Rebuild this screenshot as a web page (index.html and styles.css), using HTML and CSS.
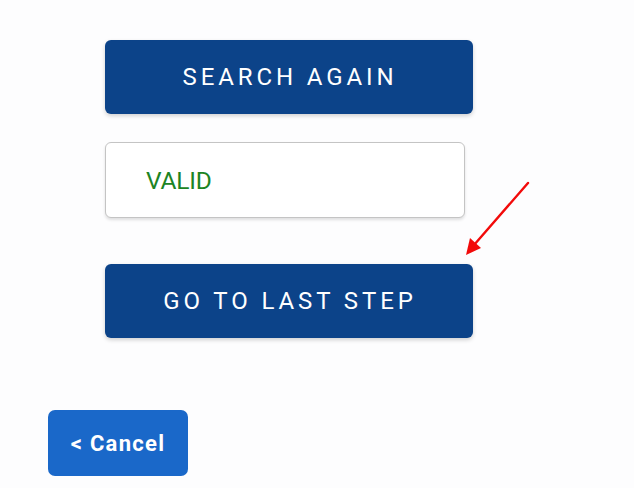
FILE: index.html
```html
<!DOCTYPE html>
<html>
<head>
<meta charset="utf-8">
<link rel="stylesheet" href="styles.css">
</head>
<body>
<div class="page">
  <div class="column">
    <button class="btn primary">SEARCH AGAIN</button>
    <div class="status"><span class="valid">VALID</span></div>
    <button class="btn primary last">GO TO LAST STEP</button>
  </div>
  <button class="cancel">&lt; Cancel</button>
  <svg class="arrow" width="80" height="90" viewBox="0 0 80 90">
    <line x1="70" y1="10" x2="16" y2="72" stroke="#f20a0a" stroke-width="2.4" stroke-linecap="round"/>
    <polygon points="8,82 12,65 23,75" fill="#f20a0a"/>
  </svg>
</div>
</body>
</html>
```
FILE: styles.css
```css
html, body {
  margin: 0;
  padding: 0;
  background: #fdfdfe;
}
.page {
  position: relative;
  width: 634px;
  height: 488px;
  overflow: hidden;
  font-family: Roboto, "Liberation Sans", sans-serif;
}
.column {
  display: flex;
  flex-direction: column;
  align-items: flex-start;
  padding-left: 105px;
  padding-top: 40px;
}
.btn {
  width: 368px;
  height: 74px;
  border: none;
  border-radius: 6px;
  font-family: Roboto, "Liberation Sans", sans-serif;
  font-size: 24px;
  font-weight: 400;
  letter-spacing: 3.9px;
  color: #ffffff;
  cursor: pointer;
  padding: 0 0 0 2px;
}
.primary {
  background: #0c4389;
  box-shadow: 0 2px 4px rgba(0,0,0,0.18);
}
.status {
  margin-top: 28px;
  width: 360px;
  height: 76px;
  border: 1px solid #c4c4c4;
  border-radius: 6px;
  background: #ffffff;
  box-shadow: 0 2px 3px rgba(0,0,0,0.12);
  display: flex;
  align-items: center;
  padding-left: 40px;
  box-sizing: border-box;
}
.valid {
  color: #1c8423;
  font-size: 24.5px;
  letter-spacing: -0.2px;
}
.last {
  margin-top: 46px;
}
.cancel {
  margin-top: 72px;
  margin-left: 48px;
  width: 140px;
  height: 66px;
  border: none;
  border-radius: 7px;
  background: #1a68c9;
  color: #ffffff;
  font-family: Roboto, "Liberation Sans", sans-serif;
  font-size: 22px;
  font-weight: 700;
  letter-spacing: 1.3px;
  padding: 0;
  display: block;
}
.arrow {
  position: absolute;
  left: 458px;
  top: 173px;
}
```
